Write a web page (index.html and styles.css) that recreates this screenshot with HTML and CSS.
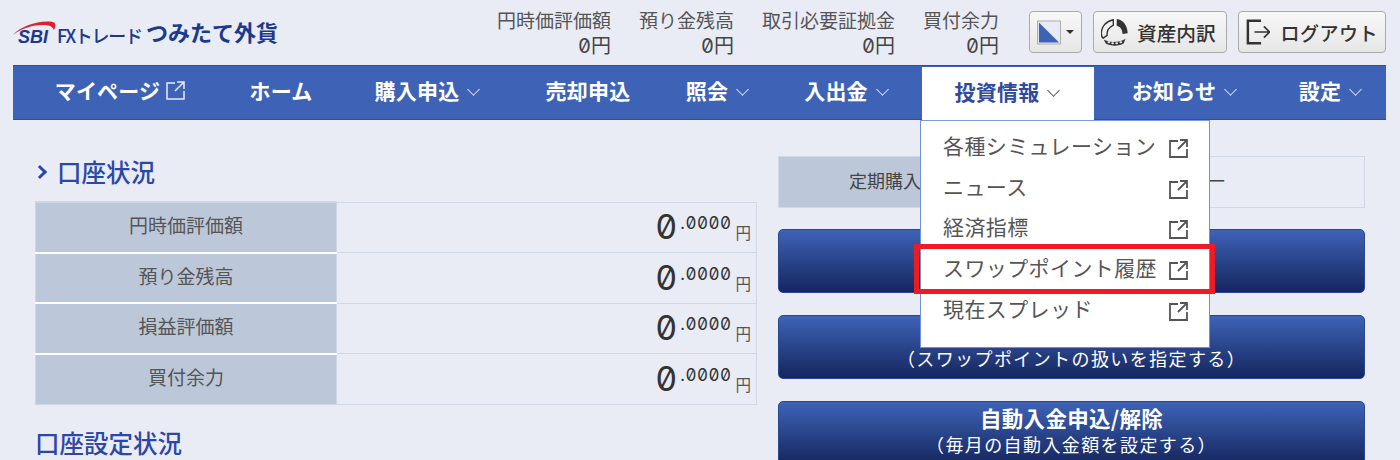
FILE: index.html
```html
<!DOCTYPE html>
<html lang="ja">
<head>
    <meta charset="UTF-8">
    <meta name="viewport" content="width=device-width, initial-scale=1.0">
    <title>SBI FXトレード つみたて外貨</title>
    <link rel="stylesheet" href="styles.css">
</head>
<body>
    <div class="page">
        <header class="header">
            <div class="logo">
                <svg class="logo-arc" width="44" height="20" viewBox="0 0 44 20">
                    <path d="M0 15C8 6 26 0 40 2C43 3 43 6 41 10C39 6 36 5 30 5C20 5 9 8 0 15Z" fill="#e0202e"/>
                </svg>
                <span class="logo-sbi">SBI</span>
                <span class="logo-fx">FXトレード</span>
                <span class="logo-name">つみたて外貨</span>
            </div>
            <div class="summary">
                <div class="summary-item"><span>円時価評価額</span><span class="summary-value"><b>0</b>円</span></div>
                <div class="summary-item"><span>預り金残高</span><span class="summary-value"><b>0</b>円</span></div>
                <div class="summary-item"><span>取引必要証拠金</span><span class="summary-value"><b>0</b>円</span></div>
                <div class="summary-item"><span>買付余力</span><span class="summary-value"><b>0</b>円</span></div>
            </div>
            <div class="tools">
                <button class="tool-button theme-button">
                    <svg width="25" height="25" viewBox="0 0 25 25">
                        <rect x="0.5" y="0.5" width="24" height="24" fill="#e8ebf3" stroke="#aaa"/>
                        <path d="M2 2L23 23H2Z" fill="#3e63b6"/>
                    </svg>
                    <span class="caret"></span>
                </button>
                <button class="tool-button asset-button">
                    <svg width="27" height="28" viewBox="32 27 79 82">
                        <path d="M78 30C97 32 110 50 110 72L95 74C95 62 88 52 78 50Z" fill="#333"/>
                        <path d="M68 32C47 36 33 52 33 72C33 78 35 84 38 86L50 78C48 66 55 55 68 48Z" fill="none" stroke="#333" stroke-width="4"/>
                        <path d="M40 90C55 100 85 100 104 88L98 102C85 110 60 110 46 102Z" fill="#333"/>
                        <ellipse cx="55" cy="98" rx="4" ry="3" fill="#eee"/>
                        <ellipse cx="66" cy="101" rx="4" ry="3" fill="#eee"/>
                        <ellipse cx="78" cy="101" rx="4" ry="3" fill="#eee"/>
                        <ellipse cx="90" cy="98" rx="4" ry="3" fill="#eee"/>
                    </svg>
                    資産内訳
                </button>
                <button class="tool-button logout-button">
                    <svg width="26" height="28" viewBox="0 0 26 28" fill="none" stroke="#333" stroke-width="2.6">
                        <path d="M16 2H2V26H16"/>
                        <path d="M9 14H25M19 8L25 14L19 20" stroke-width="1.800"/>
                    </svg>
                    ログアウト
                </button>
            </div>
        </header>

        <nav class="nav">
            <a class="nav-item">マイページ<svg class="ext-icon nav-ext" viewBox="0 0 19 19"><path d="M9 2H1V18H18V10M11 1H18V8M18 1L9 10"/></svg></a>
            <a class="nav-item">ホーム</a>
            <a class="nav-item">購入申込<span class="chevron"></span></a>
            <a class="nav-item">売却申込</a>
            <a class="nav-item">照会<span class="chevron"></span></a>
            <a class="nav-item nav-deposit">入出金<span class="chevron"></span></a>
            <div class="nav-item nav-active">
                投資情報<span class="chevron"></span>
                <ul class="menu">
                    <li class="menu-item">各種シミュレーション<svg class="ext-icon" viewBox="0 0 19 19"><path d="M9 2H1V18H18V10M11 1H18V8M18 1L9 10"/></svg></li>
                    <li class="menu-item">ニュース<svg class="ext-icon" viewBox="0 0 19 19"><path d="M9 2H1V18H18V10M11 1H18V8M18 1L9 10"/></svg></li>
                    <li class="menu-item">経済指標<svg class="ext-icon" viewBox="0 0 19 19"><path d="M9 2H1V18H18V10M11 1H18V8M18 1L9 10"/></svg></li>
                    <li class="menu-item menu-marked">スワップポイント履歴<svg class="ext-icon" viewBox="0 0 19 19"><path d="M9 2H1V18H18V10M11 1H18V8M18 1L9 10"/></svg></li>
                    <li class="menu-item">現在スプレッド<svg class="ext-icon" viewBox="0 0 19 19"><path d="M9 2H1V18H18V10M11 1H18V8M18 1L9 10"/></svg></li>
                </ul>
            </div>
            <a class="nav-item">お知らせ<span class="chevron"></span></a>
            <a class="nav-item">設定<span class="chevron"></span></a>
        </nav>

        <main class="main">
            <section class="left">
                <h2 class="title title-first"><span class="title-arrow"></span>口座状況</h2>
                <table class="status-table">
                    <tr><th>円時価評価額</th><td><span class="big">0</span><span class="small">.0000</span><span class="unit">円</span></td></tr>
                    <tr><th>預り金残高</th><td><span class="big">0</span><span class="small">.0000</span><span class="unit">円</span></td></tr>
                    <tr><th>損益評価額</th><td><span class="big">0</span><span class="small">.0000</span><span class="unit">円</span></td></tr>
                    <tr><th>買付余力</th><td><span class="big">0</span><span class="small">.0000</span><span class="unit">円</span></td></tr>
                </table>
                <h2 class="title">口座設定状況</h2>
            </section>
            <section class="right">
                <div class="plan-row">
                    <div class="plan-label">定期購入</div>
                    <div class="plan-value">ー</div>
                </div>
                <a class="big-button"></a>
                <a class="big-button"><small>（スワップポイントの扱いを指定する）</small></a>
                <a class="big-button"><strong>自動入金申込/解除</strong><small>（毎月の自動入金額を設定する）</small></a>
            </section>
        </main>
    </div>
</body>
</html>
```

FILE: styles.css
```css
* {
    box-sizing: border-box;
}
body {
    margin: 0;
    background-color: #e9ecf5;
    color: #444;
    font-family: "Noto Sans CJK JP", "Noto Sans", sans-serif;
}
.page {
    height: 460px;
    overflow: hidden;
}

/* header */
.header {
    display: flex;
    height: 65px;
    padding: 0 14px 0 13px;
}
.logo {
    position: relative;
    display: flex;
    align-items: flex-start;
    padding: 15px 0 0 5px;
    color: #1c3a8c;
    line-height: 30px;
    white-space: nowrap;
}
.logo-arc {
    position: absolute;
    left: 0;
    top: 20px;
}
.logo-sbi {
    width: 39px;
    margin-top: 7px;
    font-family: "Liberation Sans", sans-serif;
    font-size: 18px;
    font-weight: bold;
    font-style: italic;
}
.logo-fx {
    width: 89px;
    margin-top: 5px;
    font-size: 18px;
    font-weight: 500;
    letter-spacing: -1.3px;
}
.logo-name {
    margin-top: 1px;
    font-size: 22px;
    font-weight: bold;
}
.summary {
    display: flex;
    gap: 28px;
    margin-left: auto;
    padding-top: 8px;
}
.summary-item {
    display: flex;
    flex-direction: column;
    align-items: flex-end;
    gap: 1px;
    font-size: 19px;
    line-height: 24px;
    color: #555;
}
.summary-value {
    color: #444;
    font-size: 20px;
}
.summary-value b {
    font-family: Inter, sans-serif;
    font-feature-settings: "zero", "tnum";
    font-weight: normal;
    font-size: 20px;
}
.tools {
    display: flex;
    gap: 11px;
    margin-left: 30px;
    padding-top: 11px;
}
.tool-button {
    display: flex;
    align-items: center;
    height: 42px;
    padding: 0 7px;
    gap: 9px;
    border: 1px solid #aaa;
    border-radius: 4px;
    background: linear-gradient(#f8f8f8, #e6e6e6);
    color: #333;
    font-family: inherit;
    font-size: 19.700px;
    font-weight: 500;
    white-space: nowrap;
}
.theme-button {
    width: 53px;
    gap: 5px;
}
.caret {
    border-left: 4px solid transparent;
    border-right: 4px solid transparent;
    border-top: 4px solid #333;
}
.asset-button {
    width: 134px;
}
.logout-button {
    width: 148px;
    gap: 10px;
    font-size: 19px;
    letter-spacing: 0.5px;
}

/* nav */
.nav {
    display: grid;
    grid-template-columns: 214px 108px 186px 134px 126px 141px 172px 182px 110px;
    height: 55px;
    margin: 0 14px 0 13px;
    background-color: #3e63b6;
    border-top: 1px solid #2f4e9c;
    border-bottom: 1px solid #2f4e9c;
}
.nav-item {
    display: flex;
    align-items: center;
    justify-content: center;
    padding-bottom: 5px;
    color: #fff;
    font-size: 21px;
    font-weight: 700;
    letter-spacing: 0.2px;
}
.nav-deposit {
    padding-right: 9px;
}
.nav-active {
    position: relative;
    margin: 1px 0 -1px;
    background-color: #fff;
    color: #2f4a9e;
}
.chevron {
    width: 9px;
    height: 9px;
    margin: -2px 3px 0 10px;
    border-right: 1.500px solid #d5def2;
    border-bottom: 1.500px solid #d5def2;
    transform: rotate(45deg);
}
.nav-active .chevron {
    border-color: #555;
}
.ext-icon {
    width: 19px;
    height: 19px;
    margin-top: 7px;
    fill: none;
    stroke: #555;
    stroke-width: 1.800;
}
.nav-ext {
    margin: 0 0 0 6px;
    stroke: #e8edf8;
    stroke-width: 1.500;
}

/* dropdown */
.menu {
    position: absolute;
    top: 53px;
    left: -2px;
    z-index: 5;
    width: 290px;
    height: 228px;
    margin: 0;
    padding: 6px 0 0;
    list-style: none;
    background-color: #fff;
    border: 1px solid #6f8fd8;
    border-top-color: #7d9ae0;
}
.menu-item {
    position: relative;
    display: flex;
    align-items: center;
    justify-content: space-between;
    height: 40.750px;
    padding: 0 21px 5px 22px;
    color: #555;
    font-size: 21px;
    font-weight: 400;
    letter-spacing: 0.4px;
    white-space: nowrap;
}
.menu-marked::after {
    content: "";
    position: absolute;
    top: -5px;
    left: -7px;
    right: -6px;
    bottom: -4px;
    border: 5px solid #ed1c24;
}

/* main */
.main {
    display: flex;
    gap: 21px;
    padding: 0 35px;
}
.left {
    width: 722px;
}
.right {
    width: 587px;
    padding-top: 36px;
}
.title {
    margin: 23px 0 0;
    font-size: 24.500px;
    font-weight: 500;
    line-height: 30px;
    color: #2c47a8;
}
.title-first {
    display: flex;
    align-items: center;
    margin: 37px 0 14px;
}
.title-arrow {
    width: 10px;
    height: 10px;
    margin: 0 12px 0 0;
    border-top: 3px solid #2c47a8;
    border-right: 3px solid #2c47a8;
    transform: rotate(45deg);
}
.status-table {
    width: 722px;
    border-collapse: collapse;
    table-layout: fixed;
}
.status-table th {
    width: 301px;
    height: 50.500px;
    padding: 0 0 5px;
    background-color: #bcc7d9;
    border: 1px solid #ced6e6;
    border-top: 2px solid #fff;
    color: #555;
    font-size: 19px;
    font-weight: 400;
}
.status-table tr:first-child th {
    border-top-color: #ced6e6;
}
.status-table td {
    padding: 0 5px 0 0;
    border: 1px solid #d0d7e6;
    text-align: right;
    color: #333;
    white-space: nowrap;
}
.big {
    font-family: Inter, sans-serif;
    font-feature-settings: "zero", "tnum";
    font-size: 34px;
    line-height: 1;
}
.small {
    position: relative;
    top: -10px;
    padding-left: 3px;
    font-family: Inter, sans-serif;
    font-feature-settings: "zero", "tnum";
    font-size: 17px;
    letter-spacing: 0.5px;
}
.unit {
    margin-left: 4px;
    color: #555;
    font-size: 15.500px;
}
.plan-row {
    display: flex;
    height: 52px;
    margin-bottom: -1px;
    border: 1px solid #d0d7e6;
}
.plan-label {
    width: 200px;
    padding: 0 0 0 70px;
    background-color: #bcc7d9;
    font-size: 18px;
    line-height: 46px;
    white-space: nowrap;
}
.plan-value {
    margin-left: 229px;
    font-size: 18px;
    line-height: 46px;
}
.big-button {
    display: flex;
    flex-direction: column;
    align-items: center;
    justify-content: flex-end;
    height: 64px;
    margin-top: 22px;
    padding-bottom: 7.500px;
    border: 1px solid #2a4791;
    border-radius: 5px;
    background: linear-gradient(#3e63b6, #15265f);
    color: #fff;
}
.big-button strong {
    font-size: 21.500px;
    line-height: 27px;
    letter-spacing: 0.3px;
}
.big-button small {
    font-size: 18px;
    line-height: 26px;
    letter-spacing: 1.400px;
}
```
